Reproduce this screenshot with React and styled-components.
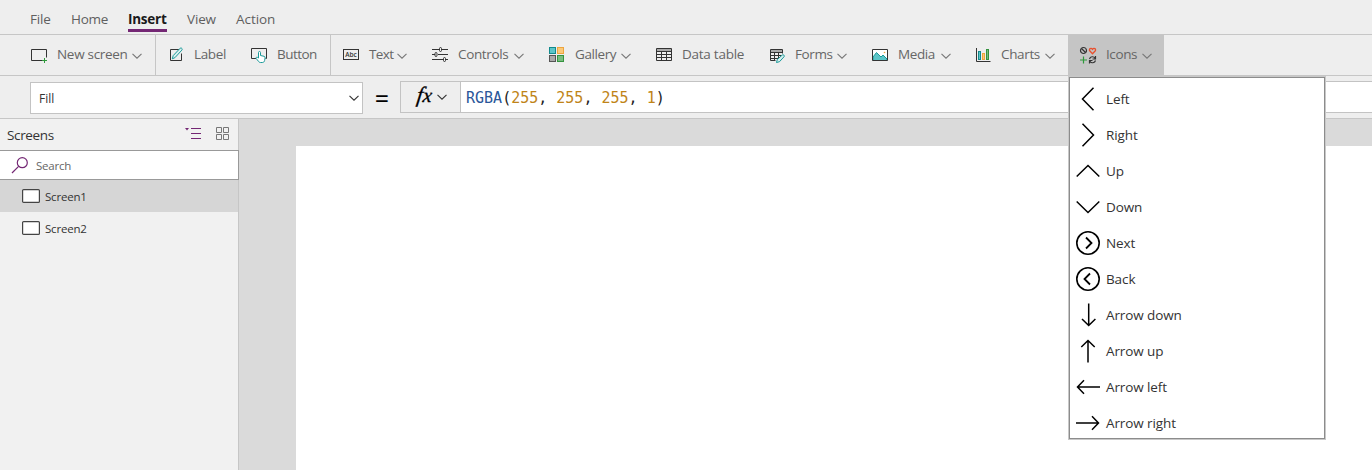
import React from 'react';
import styled, { createGlobalStyle } from 'styled-components';

const GlobalStyle = createGlobalStyle`
  * { box-sizing: border-box; }
  body {
    margin: 0;
    overflow: hidden;
    background: #eee;
    font-family: "Open Sans", "Noto Sans", sans-serif;
    font-size: 13.5px;
    color: #333;
  }
  svg { display: block; flex: none; overflow: visible; }
`;

const Page = styled.div`
  display: flex;
  flex-direction: column;
  width: 1372px;
  height: 470px;
`;

const MenuBar = styled.nav`
  display: flex;
  height: 35px;
  padding: 10px 0 0 30px;
  gap: 20px;
  border-bottom: 1px solid #c6c6c6;
`;

const MenuTab = styled.a`
  width: ${p => p.$w}px;
  height: 22px;
  line-height: 19px;
  white-space: nowrap;
  letter-spacing: ${p => p.$ls || 0}px;
  color: ${p => (p.$active ? '#1a1a1a' : '#5f5f5f')};
  font-weight: ${p => (p.$active ? 700 : 400)};
  border-bottom: ${p => (p.$active ? '3px solid #742774' : 'none')};
`;

const Toolbar = styled.div`
  display: flex;
  height: 41px;
  padding-left: 19px;
  border-bottom: 1px solid #c6c6c6;
`;

const Tool = styled.div`
  position: relative;
  display: flex;
  align-items: center;
  width: ${p => p.$w}px;
  height: 40px;
  padding-left: 12px;
  background: ${p => (p.$active ? '#c5c5c5' : 'transparent')};
  border-right: ${p => (p.$divider ? '1px solid #c6c6c6' : 'none')};
  > svg:nth-of-type(2) { margin-top: 2px; }
`;

const ToolLabel = styled.span`
  width: ${p => p.$w}px;
  margin: 0 5px 2px 10px;
  line-height: 18px;
  white-space: nowrap;
  letter-spacing: ${p => p.$ls || 0}px;
  color: #666;
`;

const FormulaBar = styled.div`
  display: flex;
  height: 43px;
  padding: 5px 0 0 30px;
  border-bottom: 1px solid #c6c6c6;
`;

const PropertySelect = styled.div`
  display: flex;
  align-items: center;
  justify-content: space-between;
  width: 333px;
  height: 32px;
  margin-top: 1px;
  padding: 0 3px 0 8px;
  font-size: 12px;
  background: #fff;
  border: 1px solid #c3c3c3;
`;

const Equals = styled.div`
  width: 37px;
  padding: 4px 0 0 1px;
  line-height: 26px;
  font-size: 25px;
  text-align: center;
  color: #000;
`;

const FxButton = styled.div`
  display: flex;
  align-items: center;
  width: 60px;
  height: 32px;
  padding-left: 16px;
  gap: 4px;
  border: 1px solid #c3c3c3;
  border-right: none;
`;

const Fx = styled.span`
  width: 16px;
  margin-bottom: 4px;
  font: italic 22px/26px "Liberation Serif", serif;
  color: #000;
  white-space: nowrap;
  -webkit-text-stroke: 0.3px #000;
  transform: skewX(-8deg);
  small { font-size: 20px; }
`;

const Formula = styled.div`
  flex: 1;
  height: 32px;
  padding: 1px 0 0 5px;
  font: 15px/30px "DejaVu Sans Mono", monospace;
  color: #222;
  white-space: pre;
  background: #fff;
  border: 1px solid #c3c3c3;
  border-right: none;
`;

const Fn = styled.span`color: #2b579a;`;
const Num = styled.span`color: #c08418;`;

const Workspace = styled.div`
  display: flex;
  flex: 1;
`;

const Sidebar = styled.aside`
  width: 239px;
  background: #f1f1f1;
  border-right: 1px solid #c6c6c6;
`;

const SidebarHeader = styled.div`
  display: flex;
  align-items: center;
  height: 31px;
  padding: 0 9px 1px 7px;
  gap: 14px;
  h2 {
    flex: 1;
    margin: 2px 0 0;
    font-size: 13.5px;
    font-weight: 400;
    letter-spacing: -0.35px;
  }
`;

const SearchBox = styled.div`
  display: flex;
  align-items: center;
  width: 239px;
  height: 30px;
  padding-left: 11px;
  gap: 8px;
  font-size: 11.5px;
  letter-spacing: -0.2px;
  color: #666;
  background: #fff;
  border: 1px solid #999;
  border-left: none;
`;

const ScreenRow = styled.div`
  display: flex;
  align-items: center;
  height: 32px;
  padding-left: 22px;
  gap: 5px;
  font-size: 11.5px;
  letter-spacing: -0.2px;
  background: ${p => (p.$selected ? '#d6d6d6' : 'transparent')};
  span { margin-top: 1px; }
`;

const CanvasArea = styled.main`
  flex: 1;
  padding: 27px 0 0 57px;
  background: #dadada;
`;

const Artboard = styled.div`
  height: 100%;
  background: #fff;
`;

const Dropdown = styled.div`
  position: absolute;
  z-index: 2;
  top: 42px;
  left: 1px;
  width: 256px;
  height: 362px;
  padding-top: 3px;
  background: #fff;
  border: 1px solid #8c8c8c;
  box-shadow: 0 0 0 1px #c8c8c8;
`;

const DropdownItem = styled.div`
  display: flex;
  align-items: center;
  height: 36px;
  padding-left: 6px;
  gap: 6px;
  letter-spacing: -0.1px;
  color: #333;
`;

const Chevron = ({ color = '#777' }) => (
  <svg width="10" height="6" viewBox="0 0 10 6" fill="none" stroke={color} strokeWidth="1.1">
    <path d="M.5 .8 5 5.2 9.5 .8" />
  </svg>
);

const Glyph = ({ children }) => (
  <svg width="16" height="16" viewBox="0 0 16 16" fill="none" stroke="#333" strokeWidth="1">
    {children}
  </svg>
);

const icons = {
  screen: (
    <Glyph>
      <path d="M11 13.5H.5v-11h15v8" />
      <path d="M13.5 11v5M11 13.5h5" stroke="#2f9a3c" />
    </Glyph>
  ),
  label: (
    <Glyph>
      <path d="M11.500 2.500h-9v11h11V6.500" />
      <path d="m4.300 11.800.9-3.200 7-7.400c1-.9 2.700.7 1.700 1.900l-7 7.600z" stroke="#199a99" fill="#d9efef" />
    </Glyph>
  ),
  button: (
    <Glyph>
      <path d="M5 11.5H.5v-10h15v10h-1" />
      <path d="M7.500 11V5.500c0-1.400 2-1.400 2 0v3l3.500.8c.8.200 1.200.8 1.100 1.600l-.5 2.600c-.3 1.300-1 2-2.300 2H9.400c-.7 0-1.200-.3-1.600-.8L5.200 11.500c-.6-1 .6-1.700 1.300-1.100z" stroke="#199a99" fill="#fff" />
    </Glyph>
  ),
  text: (
    <Glyph>
      <rect x=".5" y="2.500" width="15" height="10" />
      <text x="8" y="10" textAnchor="middle" fontFamily="Open Sans, sans-serif" fontWeight="600" fontSize="6.500" fill="#333" stroke="none">Abc</text>
    </Glyph>
  ),
  controls: (
    <Glyph>
      <path d="M0 2.500h7M10 2.500h6M0 7.500h3M6 7.500h10M0 12.500h11M14 12.500h2" />
      <rect x="7.500" y=".5" width="2" height="4" rx="1" />
      <rect x="3" y="5.500" width="2" height="4" rx="1" />
      <rect x="11.500" y="10.500" width="2" height="4" rx="1" />
    </Glyph>
  ),
  gallery: (
    <Glyph>
      <rect x=".5" y=".500" width="6" height="6" fill="#5cc5c8" stroke="#128a8c" />
      <rect x="8.500" y=".500" width="6" height="6" fill="#fbc979" stroke="#eda53e" />
      <rect x=".5" y="8.500" width="6" height="6" fill="#aaa" stroke="#555" />
      <rect x="8.500" y="8.500" width="6" height="6" fill="#79bd7f" stroke="#35933f" />
    </Glyph>
  ),
  table: (
    <Glyph>
      <rect x="1" y="2" width="14" height="2.500" fill="#aaa" stroke="none" />
      <path d="M.5 1.500h15v12H.5zM.5 4.500h15M.5 7.500h15M.5 10.500h15M5.500 4.500v9M10.500 4.500v9" />
    </Glyph>
  ),
  forms: (
    <Glyph>
      <g transform="translate(1 0)">
        <rect x="1" y="3" width="11" height="2" fill="#aaa" stroke="none" />
        <path d="M5.500 13.500h-5v-11h12v4M.5 5.500h12M.5 8.500h11M.5 11.500h8M4.500 5.500v8M8.500 5.500v6" />
        <path d="m6.500 15.500.8-3 5-4.500c1-.8 2.600.6 1.800 1.700l-4.600 5z" stroke="#199a99" fill="#d9efef" />
      </g>
    </Glyph>
  ),
  media: (
    <Glyph>
      <rect x=".5" y="2.500" width="15" height="11" fill="#fff" stroke="none" />
      <path d="m1 10 3.500-4.500 4.500 4.500 2-2 4 4v1.500H1z" fill="#5cc5c8" stroke="#199a99" />
      <path d="M.5 2.500h15v11H.5z" />
      <circle cx="12.500" cy="5.500" r=".8" fill="#f3a73c" stroke="none" />
    </Glyph>
  ),
  charts: (
    <Glyph>
      <path d="M1.500 1v13.500h14" />
      <rect x="3.500" y="4.500" width="2" height="8" fill="#5cc5c8" stroke="#128a8c" />
      <rect x="7.500" y="6.500" width="2" height="6" fill="#fbc979" stroke="#eda53e" />
      <rect x="11.500" y="2.500" width="2" height="10" fill="#79bd7f" stroke="#35933f" />
    </Glyph>
  ),
  icons: (
    <Glyph>
      <circle cx="3.500" cy="3.500" r="3" strokeWidth="1.200" />
      <path d="m1.500 1.500 4 4" strokeWidth="1.200" />
      <path d="M12.500 6.700 9.700 3.800c-1.100-1.700 1.300-3.500 2.800-1.500 1.500-2 3.900-.2 2.800 1.500z" stroke="#e8502e" strokeWidth="1.300" />
      <path d="M3.500 9.500v7M0 13h7" stroke="#2f9a3c" strokeWidth="1.200" />
      <path d="M9.500 12c.7-2.700 4.300-3 5.500-.7M15.500 9v3h-3M15.500 13.500c-.7 2.700-4.300 3-5.500.7M9.500 16.500v-3h3" strokeWidth="1.200" />
    </Glyph>
  ),
};

const tools = [
  { label: 'New screen', icon: 'screen', w: 137, lw: 70, ls: -0.3, chevron: true, divider: true },
  { label: 'Label', icon: 'label', w: 83, lw: 32, ls: -0.35 },
  { label: 'Button', icon: 'button', w: 92, lw: 41, ls: -0.55, divider: true },
  { label: 'Text', icon: 'text', w: 89, lw: 23, ls: -0.6, chevron: true },
  { label: 'Controls', icon: 'controls', w: 117, lw: 51, ls: -0.35, chevron: true },
  { label: 'Gallery', icon: 'gallery', w: 107, lw: 41, ls: -0.4, chevron: true },
  { label: 'Data table', icon: 'table', w: 113, lw: 63, ls: -0.25 },
  { label: 'Forms', icon: 'forms', w: 103, lw: 37, ls: -0.4, chevron: true },
  { label: 'Media', icon: 'media', w: 103, lw: 38, ls: -0.4, chevron: true },
  { label: 'Charts', icon: 'charts', w: 105, lw: 39, ls: -0.35, chevron: true },
  { label: 'Icons', icon: 'icons', w: 96, lw: 31, ls: -0.4, chevron: true, active: true },
];

const shapes = [
  ['Left', 'M17.500 .7 6.500 12l11 11.300'],
  ['Right', 'M6.500 .7 17.500 12l-11 11.300'],
  ['Up', 'M.7 17.500 12 6.500l11.300 11'],
  ['Down', 'M.7 6.500 12 17.500l11.300-11'],
  ['Next', 'M10 6.500 15.500 12 10 17.500', true],
  ['Back', 'M14 6.500 8.500 12l5.500 5.500', true],
  ['Arrow down', 'M12.700 .5v22M6 16l6.700 6.500L19.400 16'],
  ['Arrow up', 'M12 23.500v-22M5.300 8 12 1.500 18.700 8'],
  ['Arrow left', 'M24 12H1.500M8 5.300 1.500 12 8 18.700'],
  ['Arrow right', 'M0 12h22.500M16 5.300 22.500 12 16 18.700'],
];

const IconMenu = () => (
  <Dropdown>
    {shapes.map(([name, d, ring]) => (
      <DropdownItem key={name}>
        <svg width="24" height="24" viewBox="0 0 24 24" fill="none" stroke="#000" strokeWidth={ring ? 1.8 : 1.5}>
          {ring && <circle cx="12" cy="12" r="11.200" strokeWidth="1.600" />}
          <path d={d} />
        </svg>
        {name}
      </DropdownItem>
    ))}
  </Dropdown>
);

export default function App() {
  return (
    <Page>
      <GlobalStyle />
      <MenuBar>
        <MenuTab $w={21} $ls={-0.15}>File</MenuTab>
        <MenuTab $w={37} $ls={-0.25}>Home</MenuTab>
        <MenuTab $w={39} $ls={-0.25} $active>Insert</MenuTab>
        <MenuTab $w={29} $ls={-0.15}>View</MenuTab>
        <MenuTab $w={40} $ls={-0.05}>Action</MenuTab>
      </MenuBar>
      <Toolbar>
        {tools.map(t => (
          <Tool key={t.label} $w={t.w} $divider={t.divider} $active={t.active}>
            {icons[t.icon]}
            <ToolLabel $w={t.lw} $ls={t.ls}>{t.label}</ToolLabel>
            {t.chevron && <Chevron />}
            {t.active && <IconMenu />}
          </Tool>
        ))}
      </Toolbar>
      <FormulaBar>
        <PropertySelect>Fill<Chevron color="#333" /></PropertySelect>
        <Equals>=</Equals>
        <FxButton>
          <Fx>f<small>x</small></Fx>
          <Chevron color="#333" />
        </FxButton>
        <Formula>
          <Fn>RGBA</Fn>(<Num>255</Num>, <Num>255</Num>, <Num>255</Num>, <Num>1</Num>)
        </Formula>
      </FormulaBar>
      <Workspace>
        <Sidebar>
          <SidebarHeader>
            <h2>Screens</h2>
            <svg width="16" height="12" viewBox="0 0 16 12" stroke="#742774" fill="none">
              <path d="M5 .5h10M5 5.500h10M5 10.500h10" />
              <path d="M-1 0h4L1 2.500z" fill="#742774" stroke="none" />
            </svg>
            <svg width="13" height="14" viewBox="0 0 13 14" stroke="#777" fill="none">
              <path d="M.5 .5h5v5h-5zM7.500 .5h5v5h-5zM.5 7.500h5v5h-5zM7.500 7.500h5v5h-5z" />
            </svg>
          </SidebarHeader>
          <SearchBox>
            <svg width="17" height="17" viewBox="0 0 17 17" stroke="#742774" strokeWidth="1.200" fill="none">
              <circle cx="11.300" cy="5.700" r="5" />
              <path d="M7.600 9.400 1 16" />
            </svg>
            Search
          </SearchBox>
          {['Screen1', 'Screen2'].map((s, i) => (
            <ScreenRow key={s} $selected={i === 0}>
              <svg width="18" height="14" viewBox="0 0 18 14" stroke="#444" fill="#fff">
                <rect x=".6" y=".6" width="16.800" height="12.800" rx="1" strokeWidth="1.200" />
              </svg>
              <span>{s}</span>
            </ScreenRow>
          ))}
        </Sidebar>
        <CanvasArea>
          <Artboard />
        </CanvasArea>
      </Workspace>
    </Page>
  );
}
